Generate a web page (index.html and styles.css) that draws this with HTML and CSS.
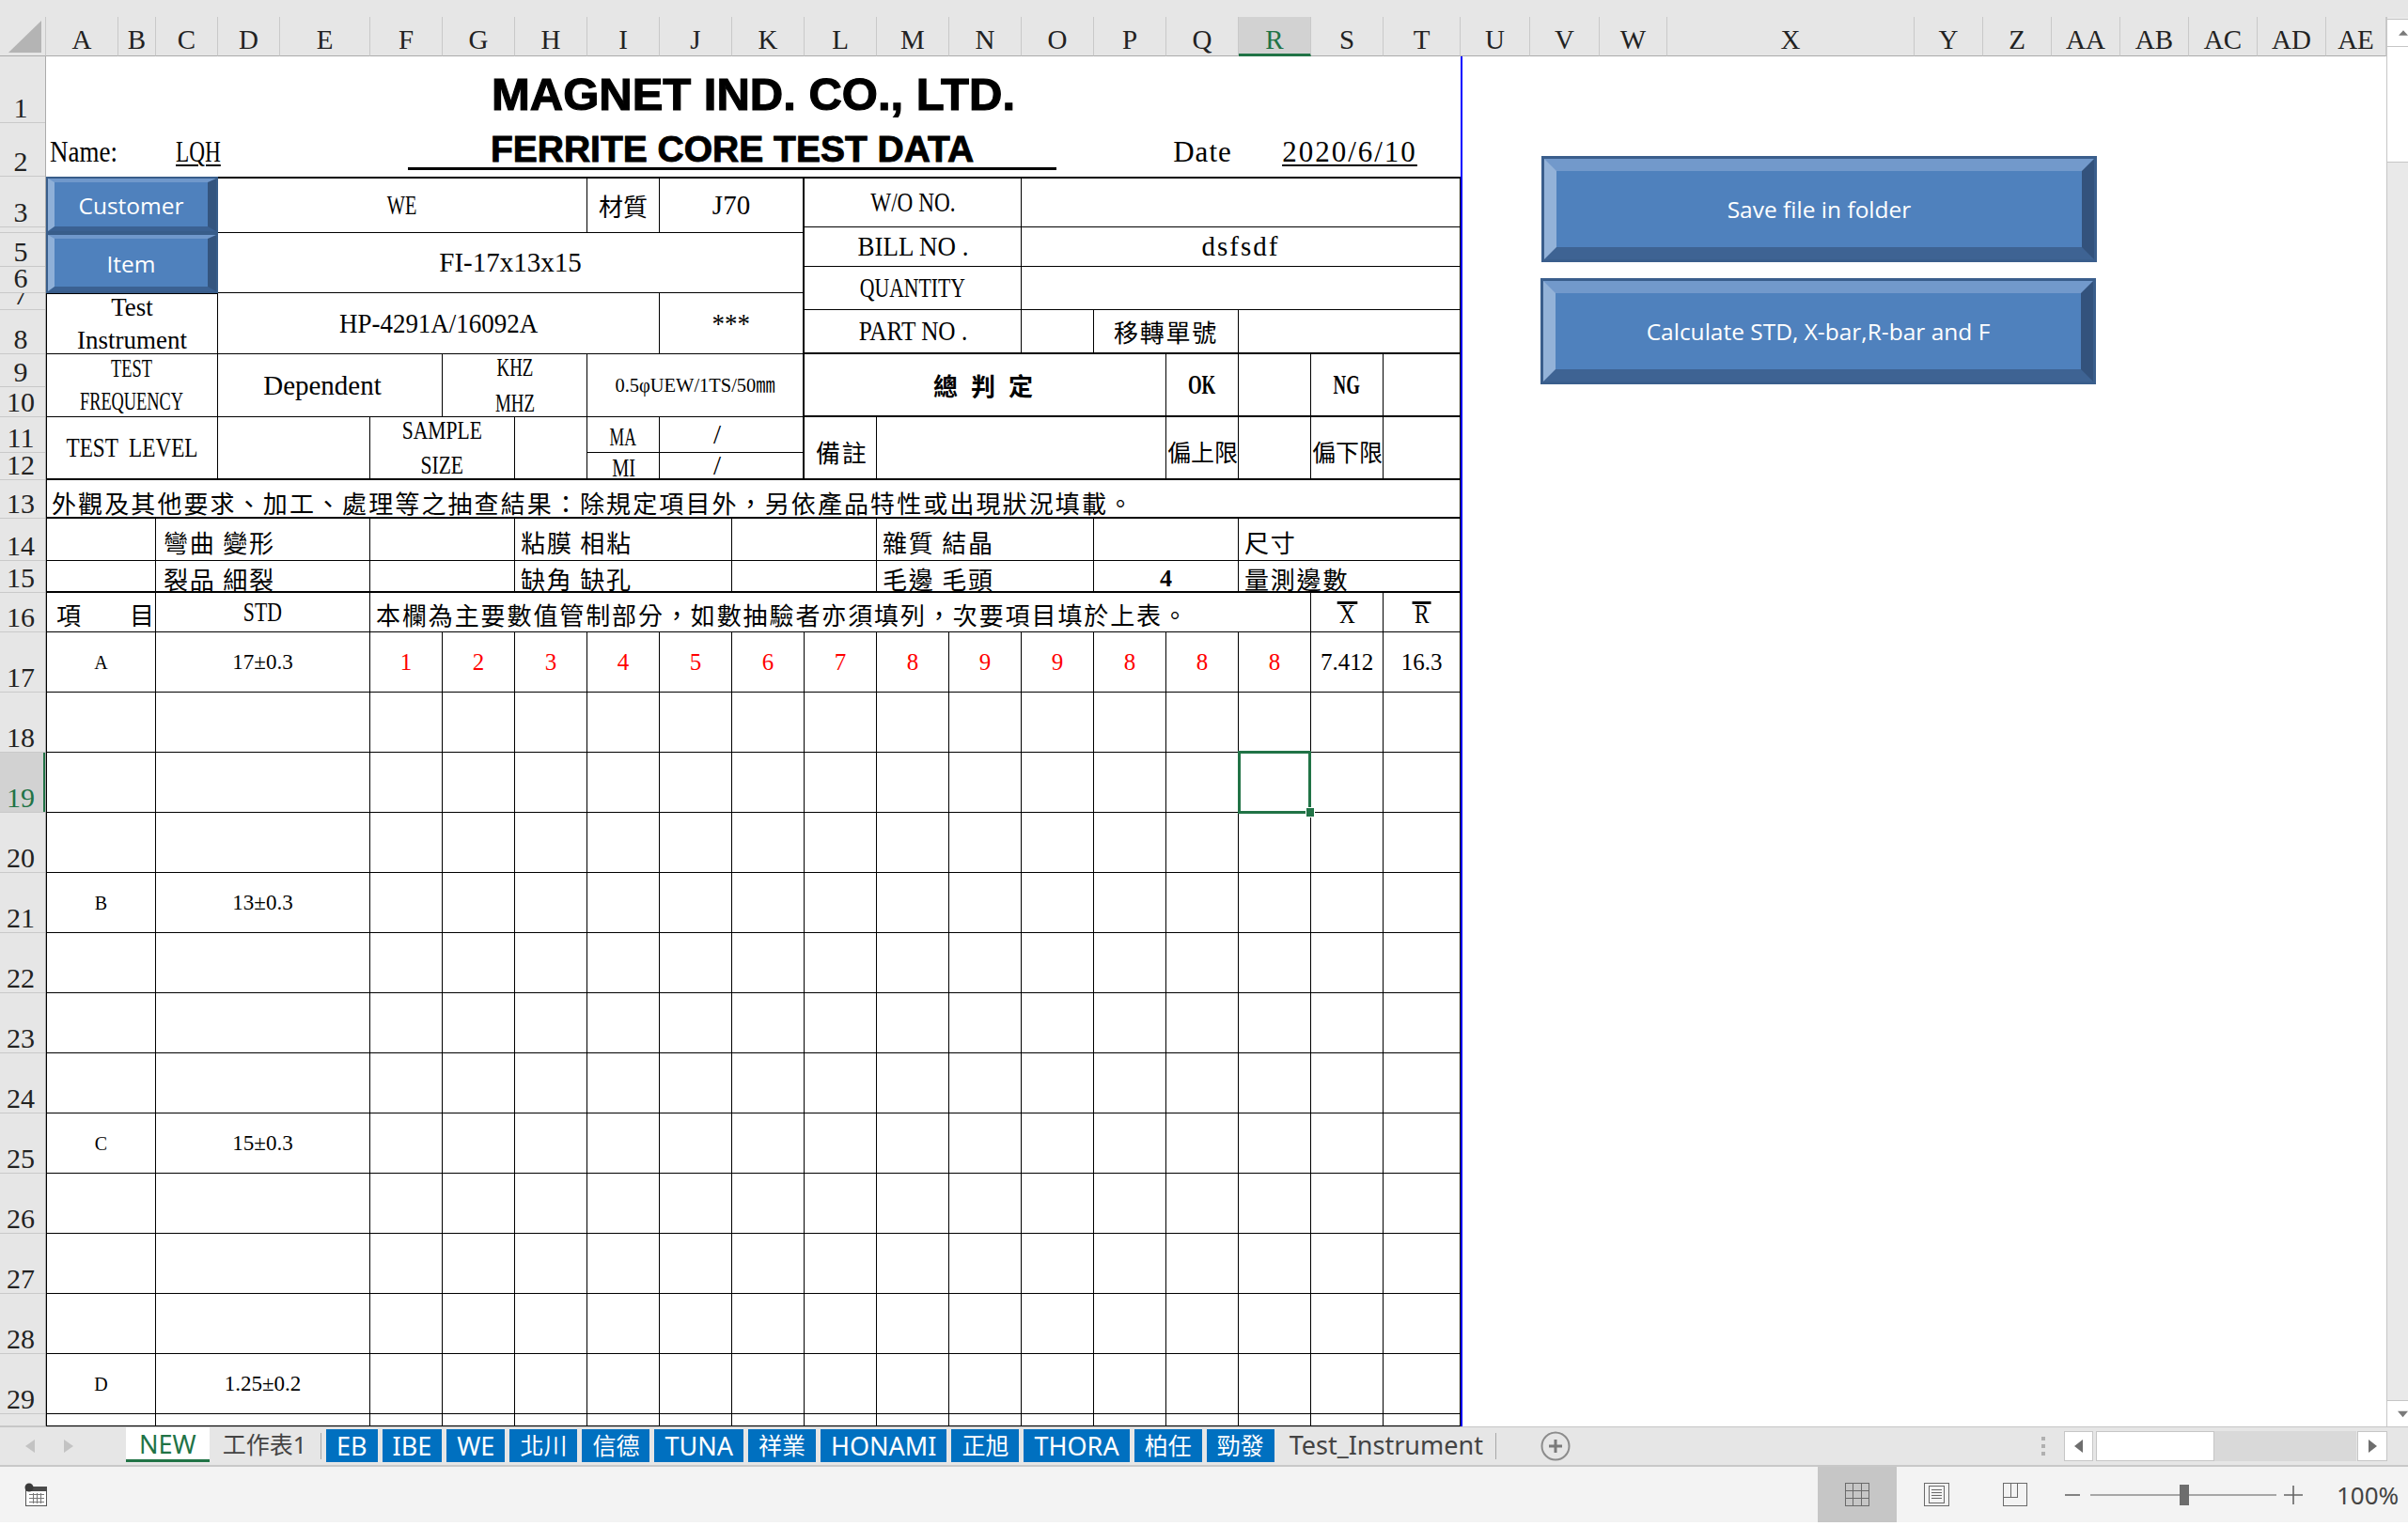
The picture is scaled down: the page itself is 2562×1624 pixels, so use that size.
FILE: index.html
```html
<!DOCTYPE html>
<html lang="zh-Hant">
<head>
<meta charset="utf-8">
<title>FERRITE CORE TEST DATA</title>
<link rel="stylesheet" href="styles.css">
</head>
<body>
<div class="topstrip"></div>
<div class="main">
  <div class="sheetwrap">
    <div class="colhdr">
      <div class="corner"><svg width="35" height="34" viewBox="0 0 35 34"><polygon points="35,0 35,34 0,34" fill="#b4b4b4"/></svg></div>
      <div class="ch wA">A</div><div class="ch wB">B</div><div class="ch wC">C</div><div class="ch wD">D</div><div class="ch wE">E</div>
      <div class="ch w77">F</div><div class="ch w77">G</div><div class="ch w77">H</div><div class="ch w77">I</div><div class="ch w77">J</div><div class="ch w77">K</div><div class="ch w77">L</div><div class="ch w77">M</div><div class="ch w77">N</div><div class="ch w77">O</div><div class="ch w77">P</div><div class="ch w77">Q</div><div class="ch w77 on">R</div><div class="ch w77">S</div>
      <div class="ch wT">T</div><div class="ch wU">U</div><div class="ch wU">V</div><div class="ch wW">W</div><div class="ch wX">X</div>
      <div class="ch w73">Y</div><div class="ch w73">Z</div><div class="ch w73">AA</div><div class="ch w73">AB</div><div class="ch w73">AC</div><div class="ch w73">AD</div><div class="ch wAE">AE</div>
    </div>
    <div class="body">
      <div class="rowhdr">
        <div class="rh h71">1</div><div class="rh h57">2</div><div class="rh h54">3</div><div class="rh h6"></div><div class="rh h36">5</div><div class="rh h28">6</div><div class="rh h18">7</div><div class="rh h47">8</div><div class="rh h35">9</div><div class="rh h32">10</div><div class="rh h38">11</div><div class="rh h29">12</div><div class="rh h41">13</div><div class="rh h45">14</div><div class="rh h34">15</div><div class="rh h42">16</div>
        <div class="rh h64">17</div><div class="rh h64">18</div><div class="rh h64 on">19</div><div class="rh h64">20</div><div class="rh h64">21</div><div class="rh h64">22</div><div class="rh h64">23</div><div class="rh h64">24</div><div class="rh h64">25</div><div class="rh h64">26</div><div class="rh h64">27</div><div class="rh h64">28</div><div class="rh h64">29</div><div class="rh h13"></div>
      </div>
      <div class="sheet">
        <!-- rows 1-2 -->
        <div class="g sec-title">
          <div class="cl nb c1-21 r1 ttl1"><span>MAGNET IND. CO., LTD.</span></div>
          <div class="cl nb c1-3 r2 lft bot nm"><span class="t x87 ol big">Name:</span></div>
          <div class="cl nb c3-5 r2 lft bot lqh"><span class="t x75 ol big ul">LQH</span></div>
          <div class="cl nb c6-16 r2 fer"><span class="ferr">FERRITE CORE TEST DATA</span></div>
          <div class="cl nb c17-18 r2 bot"><span class="t big ls1">Date</span></div>
          <div class="cl nb c18-21 r2 bot"><span class="t big ls2 ul">2020/6/10</span></div>
        </div>
        <!-- rows 3-12 -->
        <div class="g sec-form">
          <div class="cl nb c1-4 r1-3 bcell"><div class="sbtn"><div class="bev">Customer</div></div></div>
          <div class="cl c4-9 r1-3 bt2"><span class="t x7">WE</span></div>
          <div class="cl c9-10 r1-3 bt2 cjk nls">材質</div>
          <div class="cl c10-12 r1-3 bt2 br2"><span class="t">J70</span></div>
          <div class="cl c12-15 r1 bt2"><span class="t x8">W/O NO.</span></div>
          <div class="cl c15-21 r1 bt2"></div>
          <div class="cl c12-15 r2-4"><span class="t x93">BILL NO .</span></div>
          <div class="cl c15-21 r2-4"><span class="t ls2">dsfsdf</span></div>
          <div class="cl nb c1-4 r3-5 bcell"><div class="sbtn"><div class="bev">Item</div></div></div>
          <div class="cl c4-12 r3-5 br2"><span class="t">FI-17x13x15</span></div>
          <div class="cl c12-15 r4-6"><span class="t x75">QUANTITY</span></div>
          <div class="cl c15-21 r4-6"></div>
          <div class="cl c1-4 r5-7 bl bt1"><span class="t sm ml35">Test<br>Instrument</span></div>
          <div class="cl c4-10 r5-7"><span class="t x93">HP-4291A/16092A</span></div>
          <div class="cl c10-12 r5-7 br2"><span class="t x93">***</span></div>
          <div class="cl c12-15 r6 bb2"><span class="t x87">PART NO .</span></div>
          <div class="cl c15-16 r6 bb2"></div>
          <div class="cl c16-18 r6 bb2 cjk">移轉單號</div>
          <div class="cl c18-21 r6 bb2"></div>
          <div class="cl c1-4 r7-9 bl"><span class="t sm x68 ml35">TEST<br>FREQUENCY</span></div>
          <div class="cl c4-7 r7-9 dep"><span class="t">Dependent</span></div>
          <div class="cl c7-9 r7-9"><span class="t sm x7 ml38">KHZ<br>MHZ</span></div>
          <div class="cl c9-12 r7-9 br2"><span class="t tiny x93">0.5φUEW/1TS/50㎜</span></div>
          <div class="cl c12-17 r7-9 bb2 cjk b wide">總 判 定</div>
          <div class="cl c17-18 r7-9 bb2"><span class="t b x65">OK</span></div>
          <div class="cl c18-19 r7-9 bb2"></div>
          <div class="cl c19-20 r7-9 bb2"><span class="t b x65">NG</span></div>
          <div class="cl c20-21 r7-9 bb2"></div>
          <div class="cl c1-4 r9-11 bl bb2"><span class="t x8">TEST  LEVEL</span></div>
          <div class="cl c4-6 r9-11 bb2"></div>
          <div class="cl c6-8 r9-11 bb2"><span class="t sm x8 ml37">SAMPLE<br>SIZE</span></div>
          <div class="cl c8-9 r9-11 bb2"></div>
          <div class="cl c9-10 r9 pt6"><span class="t sm x65">MA</span></div>
          <div class="cl c10-12 r9 br2 slc"><span class="t">/</span></div>
          <div class="cl c9-10 r10 bb2 pt6"><span class="t sm x75">MI</span></div>
          <div class="cl c10-12 r10 br2 bb2 slc"><span class="t">/</span></div>
          <div class="cl c12-13 r9-11 bb2 cjk lft pl12 pt8">備註</div>
          <div class="cl c13-17 r9-11 bb2"></div>
          <div class="cl c17-18 r9-11 bb2 cjk lft lim pt8">偏上限</div>
          <div class="cl c18-19 r9-11 bb2"></div>
          <div class="cl c19-20 r9-11 bb2 cjk lft lim pt8">偏下限</div>
          <div class="cl c20-21 r9-11 bb2"></div>
        </div>
        <!-- row 13 -->
        <div class="g sec-13">
          <div class="cl c1-21 bl bb2 cjk lft pl5 pt8 r13t">外觀及其他要求、加工、處理等之抽查結果：除規定項目外，另依產品特性或出現狀況填載。</div>
        </div>
        <!-- rows 14-15 -->
        <div class="g sec-1415">
          <div class="cl c1-3 r1 bl"></div>
          <div class="cl c3-6 r1 cjk lft pl8 pt5">彎曲 變形</div>
          <div class="cl c6-8 r1"></div>
          <div class="cl c8-11 r1 cjk lft pl6 pt5">粘膜 相粘</div>
          <div class="cl c11-13 r1"></div>
          <div class="cl c13-16 r1 cjk lft pl6 pt5">雜質 結晶</div>
          <div class="cl c16-18 r1"></div>
          <div class="cl c18-21 r1 cjk lft pl6 pt5">尺寸</div>
          <div class="cl c1-3 r2 bl bb2"></div>
          <div class="cl c3-6 r2 bb2 cjk lft pl8 pt5">裂品 細裂</div>
          <div class="cl c6-8 r2 bb2"></div>
          <div class="cl c8-11 r2 bb2 cjk lft pl6 pt5">缺角 缺孔</div>
          <div class="cl c11-13 r2 bb2"></div>
          <div class="cl c13-16 r2 bb2 cjk lft pl6 pt5">毛邊 毛頭</div>
          <div class="cl c16-18 r2 bb2 pt5"><span class="t b four">4</span></div>
          <div class="cl c18-21 r2 bb2 cjk lft pl6 pt5">量測邊數</div>
        </div>
        <!-- row 16 -->
        <div class="g sec-16">
          <div class="cl c1-3 bl cjk nls lft pl10 pt4">項　　目</div>
          <div class="cl c3-6"><span class="t x75">STD</span></div>
          <div class="cl c6-19 cjk lft pl6 pt4 r16t">本欄為主要數值管制部分，如數抽驗者亦須填列，次要項目填於上表。</div>
          <div class="cl c19-20"><span class="t ov x8">X</span></div>
          <div class="cl c20-21"><span class="t ov x8">R</span></div>
        </div>
        <!-- rows 17-30 -->
        <div class="data">
          <div class="cl bl lbl">A</div><div class="cl std">17±0.3</div><div class="cl rd">1</div><div class="cl rd">2</div><div class="cl rd">3</div><div class="cl rd">4</div><div class="cl rd">5</div><div class="cl rd">6</div><div class="cl rd">7</div><div class="cl rd">8</div><div class="cl rd">9</div><div class="cl rd">9</div><div class="cl rd">8</div><div class="cl rd">8</div><div class="cl rd">8</div><div class="cl num">7.412</div><div class="cl num">16.3</div>
          <div class="cl bl"></div><div class="cl"></div><div class="cl"></div><div class="cl"></div><div class="cl"></div><div class="cl"></div><div class="cl"></div><div class="cl"></div><div class="cl"></div><div class="cl"></div><div class="cl"></div><div class="cl"></div><div class="cl"></div><div class="cl"></div><div class="cl"></div><div class="cl"></div><div class="cl"></div>
          <div class="cl bl"></div><div class="cl"></div><div class="cl"></div><div class="cl"></div><div class="cl"></div><div class="cl"></div><div class="cl"></div><div class="cl"></div><div class="cl"></div><div class="cl"></div><div class="cl"></div><div class="cl"></div><div class="cl"></div><div class="cl"></div><div class="cl sel"></div><div class="cl"></div><div class="cl"></div>
          <div class="cl bl"></div><div class="cl"></div><div class="cl"></div><div class="cl"></div><div class="cl"></div><div class="cl"></div><div class="cl"></div><div class="cl"></div><div class="cl"></div><div class="cl"></div><div class="cl"></div><div class="cl"></div><div class="cl"></div><div class="cl"></div><div class="cl"></div><div class="cl"></div><div class="cl"></div>
          <div class="cl bl lbl">B</div><div class="cl std">13±0.3</div><div class="cl"></div><div class="cl"></div><div class="cl"></div><div class="cl"></div><div class="cl"></div><div class="cl"></div><div class="cl"></div><div class="cl"></div><div class="cl"></div><div class="cl"></div><div class="cl"></div><div class="cl"></div><div class="cl"></div><div class="cl"></div><div class="cl"></div>
          <div class="cl bl"></div><div class="cl"></div><div class="cl"></div><div class="cl"></div><div class="cl"></div><div class="cl"></div><div class="cl"></div><div class="cl"></div><div class="cl"></div><div class="cl"></div><div class="cl"></div><div class="cl"></div><div class="cl"></div><div class="cl"></div><div class="cl"></div><div class="cl"></div><div class="cl"></div>
          <div class="cl bl"></div><div class="cl"></div><div class="cl"></div><div class="cl"></div><div class="cl"></div><div class="cl"></div><div class="cl"></div><div class="cl"></div><div class="cl"></div><div class="cl"></div><div class="cl"></div><div class="cl"></div><div class="cl"></div><div class="cl"></div><div class="cl"></div><div class="cl"></div><div class="cl"></div>
          <div class="cl bl"></div><div class="cl"></div><div class="cl"></div><div class="cl"></div><div class="cl"></div><div class="cl"></div><div class="cl"></div><div class="cl"></div><div class="cl"></div><div class="cl"></div><div class="cl"></div><div class="cl"></div><div class="cl"></div><div class="cl"></div><div class="cl"></div><div class="cl"></div><div class="cl"></div>
          <div class="cl bl lbl">C</div><div class="cl std">15±0.3</div><div class="cl"></div><div class="cl"></div><div class="cl"></div><div class="cl"></div><div class="cl"></div><div class="cl"></div><div class="cl"></div><div class="cl"></div><div class="cl"></div><div class="cl"></div><div class="cl"></div><div class="cl"></div><div class="cl"></div><div class="cl"></div><div class="cl"></div>
          <div class="cl bl"></div><div class="cl"></div><div class="cl"></div><div class="cl"></div><div class="cl"></div><div class="cl"></div><div class="cl"></div><div class="cl"></div><div class="cl"></div><div class="cl"></div><div class="cl"></div><div class="cl"></div><div class="cl"></div><div class="cl"></div><div class="cl"></div><div class="cl"></div><div class="cl"></div>
          <div class="cl bl"></div><div class="cl"></div><div class="cl"></div><div class="cl"></div><div class="cl"></div><div class="cl"></div><div class="cl"></div><div class="cl"></div><div class="cl"></div><div class="cl"></div><div class="cl"></div><div class="cl"></div><div class="cl"></div><div class="cl"></div><div class="cl"></div><div class="cl"></div><div class="cl"></div>
          <div class="cl bl"></div><div class="cl"></div><div class="cl"></div><div class="cl"></div><div class="cl"></div><div class="cl"></div><div class="cl"></div><div class="cl"></div><div class="cl"></div><div class="cl"></div><div class="cl"></div><div class="cl"></div><div class="cl"></div><div class="cl"></div><div class="cl"></div><div class="cl"></div><div class="cl"></div>
          <div class="cl bl lbl">D</div><div class="cl std">1.25±0.2</div><div class="cl"></div><div class="cl"></div><div class="cl"></div><div class="cl"></div><div class="cl"></div><div class="cl"></div><div class="cl"></div><div class="cl"></div><div class="cl"></div><div class="cl"></div><div class="cl"></div><div class="cl"></div><div class="cl"></div><div class="cl"></div><div class="cl"></div>
          <div class="cl bl"></div><div class="cl"></div><div class="cl"></div><div class="cl"></div><div class="cl"></div><div class="cl"></div><div class="cl"></div><div class="cl"></div><div class="cl"></div><div class="cl"></div><div class="cl"></div><div class="cl"></div><div class="cl"></div><div class="cl"></div><div class="cl"></div><div class="cl"></div><div class="cl"></div>
        </div>
      </div>
      <div class="rest"></div>
    </div>
    <div class="pbreak"></div>
    <div class="bigbtn b1"><div class="bev">Save file in folder</div></div>
    <div class="bigbtn b2"><div class="bev">Calculate STD, X-bar,R-bar and F</div></div>
  </div>
  <div class="vscroll">
    <div class="vup"><svg width="14" height="8" viewBox="0 0 14 8"><polygon points="7,0 14,8 0,8" fill="#7a7a7a"/></svg></div>
    <div class="vthumb"></div>
    <div class="vtrack"></div>
    <div class="vdown"><svg width="14" height="8" viewBox="0 0 14 8"><polygon points="0,0 14,0 7,8" fill="#7a7a7a"/></svg></div>
  </div>
</div>
<div class="tabbar">
  <div class="tabnav">
    <svg width="10" height="14" viewBox="0 0 10 14"><polygon points="10,0 10,14 0,7" fill="#c3c3c3"/></svg>
    <svg width="10" height="14" viewBox="0 0 10 14"><polygon points="0,0 10,7 0,14" fill="#c3c3c3"/></svg>
  </div>
  <div class="tab new">NEW</div>
  <div class="tab plain cj">工作表1</div>
  <div class="tsep"></div>
  <div class="tab blue">EB</div>
  <div class="tab blue">IBE</div>
  <div class="tab blue">WE</div>
  <div class="tab blue cj">北川</div>
  <div class="tab blue cj">信德</div>
  <div class="tab blue">TUNA</div>
  <div class="tab blue cj">祥業</div>
  <div class="tab blue">HONAMI</div>
  <div class="tab blue cj">正旭</div>
  <div class="tab blue">THORA</div>
  <div class="tab blue cj">柏任</div>
  <div class="tab blue cj">勁發</div>
  <div class="tab plain ti">Test_Instrument</div>
  <div class="tsep"></div>
  <div class="addsheet"><svg width="32" height="32" viewBox="0 0 32 32"><circle cx="16" cy="16" r="14.5" fill="none" stroke="#8c8c8c" stroke-width="2"/><path d="M16 9v14M9 16h14" stroke="#7a7a7a" stroke-width="3"/></svg></div>
  <div class="hsgroup">
    <div class="hdots"></div>
    <div class="hbtn"><svg width="9" height="14" viewBox="0 0 9 14"><polygon points="9,0 9,14 0,7" fill="#6e6e6e"/></svg></div>
    <div class="hthumb"></div>
    <div class="htrack"></div>
    <div class="hbtn rgt"><svg width="9" height="14" viewBox="0 0 9 14"><polygon points="0,0 9,7 0,14" fill="#6e6e6e"/></svg></div>
  </div>
</div>
<div class="status">
  <div class="sicon"><svg width="25" height="26" viewBox="0 0 25 26"><rect x="1.5" y="4.5" width="22" height="20" fill="#fff" stroke="#555"/><rect x="7" y="4" width="17" height="5" fill="#4a4a4a"/><circle cx="5" cy="5" r="4.5" fill="#3a3a3a"/><path d="M5 12.5h16M5 16.5h16M5 20.5h16M9.5 11v11M13.5 11v11M17.5 11v11" stroke="#777" stroke-width="1"/></svg></div>
  <div class="sright">
    <div class="vb on"><svg width="26" height="25" viewBox="0 0 26 25"><rect x="0.5" y="0.5" width="25" height="24" fill="none" stroke="#6a6a6a"/><path d="M8.5 1v23M17.5 1v23M1 8.5h24M1 16.5h24" stroke="#6a6a6a"/></svg></div>
    <div class="vb"><svg width="27" height="25" viewBox="0 0 27 25"><rect x="0.5" y="0.5" width="26" height="24" fill="none" stroke="#6a6a6a"/><rect x="5.5" y="3.5" width="16" height="18" fill="none" stroke="#6a6a6a"/><path d="M8 7.5h11M8 10.5h11M8 13.5h11M8 16.5h11" stroke="#6a6a6a"/></svg></div>
    <div class="vb"><svg width="26" height="25" viewBox="0 0 26 25"><rect x="0.5" y="0.5" width="25" height="24" fill="none" stroke="#6a6a6a"/><path d="M8.5 1v15M1 15.5h15M15.5 1v15" stroke="#6a6a6a"/></svg></div>
    <svg class="zm" width="16" height="4" viewBox="0 0 16 4"><path d="M0 2h16" stroke="#666" stroke-width="1.6"/></svg>
    <div class="slider"><div class="sthumb"></div></div>
    <svg class="zp" width="20" height="20" viewBox="0 0 20 20"><path d="M0 10h20M10 0v20" stroke="#666" stroke-width="1.6"/></svg>
    <div class="zpct">100%</div>
  </div>
</div>
</body>
</html>
```

FILE: styles.css
```css
* { box-sizing: border-box; margin: 0; padding: 0; }
html, body { width: 2562px; height: 1624px; overflow: hidden; background: #fff; }
body { font-family: "Liberation Serif", "Noto Sans CJK TC", serif; color: #000; }

.topstrip { height: 18px; background: #e6e6e6; }
.main { display: flex; height: 1500px; }
.sheetwrap { width: 2539px; flex: none; position: relative; display: flex; flex-direction: column; overflow: hidden; }

/* column header */
.colhdr { display: flex; height: 42px; flex: none; background: #e6e6e6; }
.corner { width: 49px; flex: none; display: flex; align-items: flex-end; justify-content: flex-end; padding: 0 4px 3px 0; border-right: 1px solid #c9c9c9; border-bottom: 1px solid #ababab; }
.ch { flex: none; display: flex; align-items: flex-end; justify-content: center; padding-bottom: 2px; font-size: 29px; line-height: 1; color: #222; border-right: 1px solid #c9c9c9; border-bottom: 1px solid #ababab; }
.ch.on { background: #d2d2d2; color: #217346; border-bottom: 3px solid #217346; padding-bottom: 0; }
.wA { width: 77px; } .wB { width: 40px; } .wC { width: 66px; } .wD { width: 66px; } .wE { width: 96px; }
.w77 { width: 77px; } .wT { width: 82px; } .wU { width: 74px; } .wW { width: 72px; } .wX { width: 263px; } .w73 { width: 73px; }
.wAE { flex: 1; }

/* body */
.body { display: flex; flex: 1; min-height: 0; }
.rowhdr { width: 49px; flex: none; background: #e6e6e6; border-right: 1px solid #ababab; display: flex; flex-direction: column; overflow: hidden; }
.rh { flex: none; display: flex; align-items: flex-end; justify-content: center; padding: 0 4px 3px 0; font-size: 30px; line-height: 24px; color: #222; border-bottom: 1px solid #c9c9c9; overflow: hidden; }
.rh.on { background: #d2d2d2; color: #217346; box-shadow: inset -2px 0 0 #217346; }
.h71 { height: 71px; } .h57 { height: 57px; } .h54 { height: 54px; } .h6 { height: 6px; } .h36 { height: 36px; }
.h28 { height: 28px; } .h18 { height: 18px; } .h47 { height: 47px; } .h35 { height: 35px; } .h32 { height: 32px; }
.h38 { height: 38px; } .h29 { height: 29px; } .h41 { height: 41px; } .h45 { height: 45px; } .h34 { height: 34px; }
.h42 { height: 42px; } .h64 { height: 64px; } .h13 { height: 13px; }

.sheet { width: 1505px; flex: none; display: flex; flex-direction: column; }
.rest { flex: 1; }

/* grids */
.g { display: grid; flex: none; grid-template-columns: 77px 40px 66px 66px 96px repeat(14, 77px) 82px; }
.sec-title { grid-template-rows: 71px 57px; }
.sec-form { grid-template-rows: 54px 6px 36px 28px 18px 47px 35px 32px 38px 29px; }
.sec-13 { grid-template-rows: 41px; }
.sec-1415 { grid-template-rows: 45px 34px; }
.sec-16 { grid-template-rows: 42px; }
.data { display: grid; flex: none; grid-template-columns: 117px 228px repeat(14, 77px) 82px; grid-template-rows: repeat(13, 64px) 13px; }

.c1-21 { grid-column: 1 / 21; } .c1-3 { grid-column: 1 / 3; } .c3-5 { grid-column: 3 / 5; } .c6-16 { grid-column: 6 / 16; }
.c17-18 { grid-column: 17 / 18; } .c18-21 { grid-column: 18 / 21; } .c1-4 { grid-column: 1 / 4; } .c4-9 { grid-column: 4 / 9; }
.c9-10 { grid-column: 9 / 10; } .c10-12 { grid-column: 10 / 12; } .c4-12 { grid-column: 4 / 12; } .c4-10 { grid-column: 4 / 10; }
.c4-7 { grid-column: 4 / 7; } .c7-9 { grid-column: 7 / 9; } .c9-12 { grid-column: 9 / 12; } .c4-6 { grid-column: 4 / 6; }
.c6-8 { grid-column: 6 / 8; } .c8-9 { grid-column: 8 / 9; } .c12-15 { grid-column: 12 / 15; } .c15-21 { grid-column: 15 / 21; }
.c15-16 { grid-column: 15 / 16; } .c16-18 { grid-column: 16 / 18; } .c12-17 { grid-column: 12 / 17; } .c18-19 { grid-column: 18 / 19; }
.c19-20 { grid-column: 19 / 20; } .c20-21 { grid-column: 20 / 21; } .c12-13 { grid-column: 12 / 13; } .c13-17 { grid-column: 13 / 17; }
.c3-6 { grid-column: 3 / 6; } .c8-11 { grid-column: 8 / 11; } .c11-13 { grid-column: 11 / 13; } .c13-16 { grid-column: 13 / 16; }
.c6-19 { grid-column: 6 / 19; }
.r1 { grid-row: 1 / 2; } .r2 { grid-row: 2 / 3; } .r1-3 { grid-row: 1 / 3; } .r2-4 { grid-row: 2 / 4; } .r3-5 { grid-row: 3 / 5; }
.r4-6 { grid-row: 4 / 6; } .r5-7 { grid-row: 5 / 7; } .r6 { grid-row: 6 / 7; } .r7-9 { grid-row: 7 / 9; } .r9-11 { grid-row: 9 / 11; }
.r9 { grid-row: 9 / 10; } .r10 { grid-row: 10 / 11; }

/* cells */
.cl { display: flex; align-items: center; justify-content: center; border-right: 1px solid #000; border-bottom: 1px solid #000; white-space: nowrap; font-size: 29px; line-height: 1; min-width: 0; }
.nb { border: none; }
.bl { border-left: 1px solid #000; }
.bt1 { border-top: 1px solid #000; }
.bt2 { border-top: 2px solid #000; }
.bb2 { border-bottom-width: 2px; }
.br2 { border-right-width: 2px; }
.lft { justify-content: flex-start; }
.pl5 { padding-left: 5px; } .pl6 { padding-left: 6px; } .pl8 { padding-left: 8px; } .pl10 { padding-left: 10px; } .pl12 { padding-left: 12px; }
.pt4 { padding-top: 4px; } .pt5 { padding-top: 5px; } .pt6 { padding-top: 6px; } .pt8 { padding-top: 8px; }

.t { display: inline-block; white-space: pre; }
.ol { transform-origin: left center; }
.x65 { transform: scaleX(.65); } .x68 { transform: scaleX(.68); } .x7 { transform: scaleX(.7); } .x75 { transform: scaleX(.75); }
.x8 { transform: scaleX(.8); } .x87 { transform: scaleX(.87); } .x93 { transform: scaleX(.93); }
.big { font-size: 31px; }
.sm { font-size: 27px; }
.tiny { font-size: 22px; }
.b { font-weight: 700; }
.ml35 { line-height: 35px; text-align: center; }
.ml37 { line-height: 37px; text-align: center; }
.ml38 { line-height: 38px; text-align: center; }
.ls1 { letter-spacing: 1px; } .ls2 { letter-spacing: 2px; }
.ul { text-decoration: underline; text-decoration-thickness: 2px; text-underline-offset: 3px; }

.cjk { font-family: "Noto Sans CJK TC", sans-serif; font-size: 26px; letter-spacing: 1.8px; }
.cjk.nls { letter-spacing: 0; }
.cjk.r13t { letter-spacing: 2.1px; }
.cjk.r16t { letter-spacing: 1.9px; }
.cjk.wide { letter-spacing: 4px; }
.lim { font-size: 25px; letter-spacing: 0; padding-left: 1px; }
.dep { padding-right: 16px; }
.slc { padding-right: 30px; }
.four { font-size: 26px; }
.ov { border-top: 3px solid #000; padding: 0 3px; line-height: 21px; }

/* title rows */
.ttl1 { align-items: flex-end; padding-bottom: 6px; font-family: "Liberation Sans", sans-serif; font-weight: 700; font-size: 49px; -webkit-text-stroke: 1.2px #000; }
.bot { align-items: flex-end; padding-bottom: 11px; }
.nm { padding-left: 4px; }
.lqh { padding-left: 21px; }
.fer { align-items: flex-end; padding-bottom: 7px; }
.ferr { font-family: "Liberation Sans", sans-serif; font-weight: 700; font-size: 39px; line-height: 38px; border-bottom: 3px solid #000; padding: 0 88px; -webkit-text-stroke: 0.9px #000; }

/* data rows */
.lbl { font-size: 20px; }
.std { font-size: 23px; }
.rd { color: #ff0000; font-size: 25px; }
.num { font-size: 25px; }
.sel { position: relative; }
.sel::after { content: ""; position: absolute; left: -1px; top: -2px; right: -1px; bottom: -2px; border: 3px solid #217346; }
.sel::before { content: ""; position: absolute; right: -5px; bottom: -6px; width: 8px; height: 9px; background: #217346; border: 1px solid #fff; z-index: 2; }

/* shape buttons */
.bcell { align-items: stretch; justify-content: stretch; }
.sbtn { flex: 1; display: flex; background: #385d8a; padding: 2px; }
.bev { flex: 1; display: flex; align-items: center; justify-content: center; background: #4f81bd; border-style: solid; color: #fff; font-family: "Open Sans", sans-serif; font-size: 24.5px; line-height: 1; white-space: nowrap; }
.sbtn .bev { border-width: 4px 9px 5px 7px; border-color: #7098cb #34557f #3b6192 #8fb0d8; padding-top: 3px; }
.bigbtn { position: absolute; display: flex; background: #3a5e8c; padding: 3px; }
.bigbtn .bev { border-width: 13px; border-color: #7299cb #33527c #3e6393 #93b2d8; padding-top: 2px; }
.b1 { left: 1640px; top: 148px; width: 591px; height: 113px; }
.b2 { left: 1639px; top: 278px; width: 591px; height: 113px; }
.pbreak { position: absolute; left: 1554px; top: 42px; width: 2px; height: 1458px; background: #0000ff; }

/* vertical scrollbar */
.vscroll { width: 23px; flex: none; background: #e9e9e9; border-left: 1px solid #c6c6c6; display: flex; flex-direction: column; overflow: hidden; }
.vup { height: 30px; margin-top: 2px; background: #fff; border-top: 1px solid #c6c6c6; border-bottom: 1px solid #c6c6c6; display: flex; align-items: center; padding-left: 12px; flex: none; }
.vthumb { height: 123px; flex: none; background: #fff; border-bottom: 1px solid #c6c6c6; }
.vtrack { flex: 1; }
.vdown { height: 28px; flex: none; background: #fff; border-top: 1px solid #c6c6c6; display: flex; align-items: center; padding-left: 11px; }

/* sheet tabs */
.tabbar { height: 43px; display: flex; background: #e6e6e6; border-top: 1px solid #c6c6c6; border-bottom: 2px solid #c8c8c8; font-family: "Noto Sans", "Noto Sans CJK TC", sans-serif; }
.tabnav { width: 134px; flex: none; display: flex; align-items: center; padding-left: 27px; gap: 31px; }
.tab { flex: none; display: flex; align-items: center; height: 35px; margin-top: 2px; padding: 0 11px; font-size: 27px; line-height: 1; white-space: nowrap; }
.tab.cj { font-size: 25px; }
.tab.blue { background: #0070c0; color: #fff; margin-left: 5px; }
.tab.new { background: #fff; color: #217346; height: 37px; margin-top: 0; border-bottom: 3px solid #217346; padding: 0 14px; }
.tab.plain { color: #444; height: 37px; margin-top: 0; padding: 0 14px; }
.tab.ti { margin-left: 4px; padding: 0 12px; }
.tsep { flex: none; width: 1px; height: 28px; align-self: center; background: #a8a8a8; margin-left: 1px; }
.addsheet { flex: none; display: flex; align-items: center; margin-left: 47px; }
.hsgroup { margin-left: auto; display: flex; align-items: center; padding-right: 22px; }
.hdots { width: 4px; height: 20px; background: repeating-linear-gradient(#b0b0b0 0 4px, transparent 4px 8px); margin-right: 20px; }
.hbtn { width: 31px; height: 32px; background: #fff; border: 1px solid #c6c6c6; display: flex; align-items: center; justify-content: center; }
.hbtn.rgt { width: 32px; margin-left: 1px; }
.hthumb { width: 126px; height: 32px; margin-left: 3px; background: #fff; border: 1px solid #c6c6c6; }
.htrack { width: 151px; height: 32px; background: #d9d9d9; }

/* status bar */
.status { height: 59px; background: #f3f3f3; display: flex; align-items: center; }
.sicon { margin-left: 26px; display: flex; }
.sright { margin-left: auto; display: flex; align-items: center; height: 100%; padding-right: 12px; }
.vb { width: 84px; height: 100%; display: flex; align-items: center; justify-content: center; }
.vb.on { background: #c6c6c6; }
.zm { margin-left: 11px; }
.slider { margin-left: 11px; width: 198px; height: 2px; background: #a6a6a6; position: relative; }
.sthumb { position: absolute; left: 95px; top: -10px; width: 10px; height: 22px; background: #6d6d6d; }
.zp { margin-left: 8px; }
.zpct { margin-left: 36px; width: 64px; font-family: "Noto Sans", sans-serif; font-size: 26px; line-height: 1; color: #444; white-space: nowrap; }
```
